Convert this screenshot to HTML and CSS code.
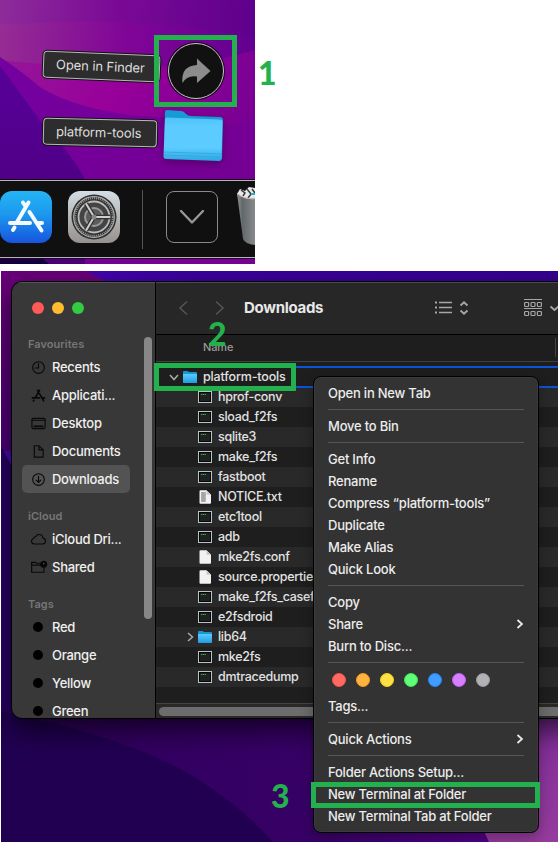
FILE: index.html
```html
<!DOCTYPE html>
<html lang="en">
<head>
<meta charset="utf-8">
<title>Open a terminal at platform-tools</title>
<link rel="stylesheet" href="styles.css">
</head>
<body>
<svg width="0" height="0" class="defs">
  <defs>
    <linearGradient id="folderFront" x1="0" y1="0" x2="0" y2="1"><stop offset="0" stop-color="#4fc3f5"/><stop offset=".2" stop-color="#5ccbff"/><stop offset=".7" stop-color="#5ccbff"/><stop offset="1" stop-color="#2ba6e0"/></linearGradient>
    <linearGradient id="smallFront" x1="0" y1="0" x2="0" y2="1"><stop offset="0" stop-color="#5ccaff"/><stop offset="1" stop-color="#1f9de0"/></linearGradient>
    <symbol id="exec" viewBox="0 0 14 12"><rect x=".5" y=".5" width="13" height="11" fill="#202221" stroke="#b9c4c7"/><rect x="1.5" y="1.5" width="11" height="9" fill="none" stroke="#000" stroke-width=".8"/><path d="M3 3.5h5" stroke="#37b24d" stroke-width="1" stroke-dasharray="1.3 .5"/></symbol>
    <symbol id="file" viewBox="0 0 14 14"><path d="M1.500 1.500Q1.500.3 2.500.3H8.500L13 4.800V13Q13 13.800 12 13.800H2.500Q1.500 13.800 1.500 13Z" fill="#f2f2f2"/><path d="M8.500.3L13 4.800H9.500Q8.500 4.800 8.500 4Z" fill="#c8c8c8"/></symbol>
    <symbol id="text" viewBox="0 0 14 14"><use href="#file"/><path d="M3 2h5v10H3z" fill="#b8b8b8"/><path d="M3.500 3h3M3.500 5h4M3.500 7h3M3.500 9h4M3.500 11h3" stroke="#777" stroke-width=".6"/></symbol>
    <symbol id="folder" viewBox="0 0 14 14"><path d="M0 2Q0 1 1 1H4.500L6 2H13Q14 2 14 3V12Q14 13 13 13H1Q0 13 0 12Z" fill="#1597d4"/><path d="M0 4H14V12Q14 13 13 13H1Q0 13 0 12Z" fill="url(#smallFront)"/></symbol>
  </defs>
</svg>

<section class="dock-scene">
  <svg class="wallpaper" viewBox="0 0 255 264" preserveAspectRatio="none">
    <defs>
      <linearGradient id="w1" x1="0" y1="0" x2="1" y2=".15"><stop offset="0" stop-color="#8e2c9a"/><stop offset=".45" stop-color="#7a0a96"/><stop offset="1" stop-color="#5e008c"/></linearGradient>
      <linearGradient id="w2" x1="0" y1="0" x2="1" y2=".1"><stop offset="0" stop-color="#962d94"/><stop offset=".5" stop-color="#800597"/><stop offset="1" stop-color="#620090"/></linearGradient>
      <linearGradient id="w3" x1="0" y1="0" x2="1" y2=".4"><stop offset="0" stop-color="#941898"/><stop offset=".45" stop-color="#98009a"/><stop offset="1" stop-color="#760093"/></linearGradient>
      <linearGradient id="w4" x1="0" y1="0" x2=".8" y2="1"><stop offset="0" stop-color="#7400a0"/><stop offset="1" stop-color="#760091"/></linearGradient>
      <linearGradient id="w5" x1="0" y1="0" x2="0" y2="1"><stop offset="0" stop-color="#58009a"/><stop offset="1" stop-color="#490078"/></linearGradient>
    </defs>
    <rect width="255" height="264" fill="url(#w1)"/>
    <path d="M0 24Q50 23 80 21Q170 21 255 38V264H0Z" fill="url(#w2)"/>
    <path d="M0 60Q30 64 70 65Q170 75 255 50V264H0Z" fill="url(#w3)"/>
    <path d="M0 57Q20 70 40 87Q90 118 190 118Q225 128 255 122V264H0Z" fill="url(#w4)"/>
    <path d="M0 66L42 123Q75 158 85 180V264H0Z" fill="url(#w5)"/>
    <path d="M0 259H43L49 264H0Z" fill="#16003c"/>
  </svg>
  <div class="stack">
    <div class="stack-row finder-row"><span class="bubble open">Open in Finder</span>
      <span class="round"><svg width="30" height="26" viewBox="0 0 30 26"><path d="M16 0.500L29.500 13L16 25V18.500Q6 17 1.500 25Q-.5 8 16 7Z" fill="#8c8c8c"/></svg></span>
    </div>
    <div class="stack-row folder-row"><span class="bubble tools">platform-tools</span>
      <svg class="bigfolder" width="62" height="54" viewBox="0 0 62 54"><path d="M3 3Q3 1 5 1L19 2Q22 2 24 5Q26 7 29 7L58 8Q61 8 61 11L60 49Q60 51 57 51L4 49Q2 49 2 47Z" fill="#159bd6"/><path d="M3 10Q3 8.500 5 8.500L58 10.500Q60.500 10.500 60.500 13L59.500 49Q59.500 52 57 52L4 50Q1.500 50 1.500 47Z" fill="url(#folderFront)"/><path d="M2 43L60 45M2 46L60 48" stroke="#2ca7df" stroke-width=".8"/></svg>
    </div>
  </div>
  <div class="dock">
    <svg class="app" width="52" height="52" viewBox="0 0 52 52"><defs><linearGradient id="store" x1="0" y1="0" x2="0" y2="1"><stop offset="0" stop-color="#24b5f5"/><stop offset=".45" stop-color="#1c98ee"/><stop offset="1" stop-color="#1755de"/></linearGradient></defs><rect width="52" height="52" rx="12" fill="url(#store)"/><g stroke="#f4f8ff" stroke-width="4" stroke-linecap="round" fill="none"><path d="M28.500 11.500L17 31M14.500 36.500L13 39M23 11.500L25 14.500M29.500 21L41.500 39.500M10 32H30M37 32H42"/></g></svg>
    <svg class="app" width="52" height="52" viewBox="0 0 52 52"><defs><linearGradient id="gear" x1="0" y1="0" x2="0" y2="1"><stop offset="0" stop-color="#d3dde3"/><stop offset="1" stop-color="#96918e"/></linearGradient></defs><rect width="52" height="52" rx="12" fill="url(#gear)"/><circle cx="26" cy="26" r="22.500" fill="#303030"/><circle cx="26" cy="26" r="20.300" fill="none" stroke="#b0b0b0" stroke-width="1.200"/><circle cx="26" cy="26" r="18.800" fill="none" stroke="#999" stroke-width="2" stroke-dasharray="1 1"/><circle cx="26" cy="26" r="15.500" fill="#444" stroke="#bcbcbc" stroke-width="1.800"/><circle cx="26" cy="26" r="9" fill="#5c5c5c" stroke="#999" stroke-width="2"/><path d="M26 26H42M26 26L18 12.500M26 26L18 39.500" stroke="#333" stroke-width="4.500"/><path d="M26 26H42M26 26L18 12.500M26 26L18 39.500" stroke="#cfcfcf" stroke-width="2"/><circle cx="26" cy="26" r="2.500" fill="#888"/></svg>
    <span class="divider"></span>
    <span class="tile"><svg width="26" height="16" viewBox="0 0 26 16"><path d="M2 2L13 13.500L24 2" fill="none" stroke="#989898" stroke-width="2.400" stroke-linecap="round" stroke-linejoin="round"/></svg></span>
    <svg class="bin" width="18" height="60" viewBox="0 0 18 60"><defs><linearGradient id="can" x1="0" y1="0" x2="1" y2="0"><stop offset="0" stop-color="#8f9394"/><stop offset=".3" stop-color="#62676a"/><stop offset="1" stop-color="#878b8c"/></linearGradient></defs><path d="M0 8L3 3L8 5L12 1L18 2V14H2Z" fill="#e8e8e8"/><path d="M4 4L8 7L6 10M10 3L14 8L11 12M15 3L18 7" stroke="#393939" stroke-width="1.500" fill="none"/><path d="M14 7h4v2h-4z" fill="#1fb5c5"/><path d="M0 7Q6 14 18 13V59Q8 58 6 53Z" fill="url(#can)"/><path d="M0 7Q6 13.500 18 12.500" fill="none" stroke="#bbb"/></svg>
  </div>
  <span class="mark mark-1"></span>
</section>
<span class="num n1">1</span>

<section class="finder-scene">
  <svg class="wallpaper" viewBox="0 0 557 571" preserveAspectRatio="none">
    <defs>
      <linearGradient id="b1" x1="0" y1="0" x2="1" y2="0"><stop offset="0" stop-color="#4a08b8"/><stop offset=".35" stop-color="#3a009a"/><stop offset="1" stop-color="#36008f"/></linearGradient>
      <linearGradient id="b2" x1="0" y1="0" x2="0" y2="1"><stop offset="0" stop-color="#680078"/><stop offset="1" stop-color="#4a0078"/></linearGradient>
      <linearGradient id="b3" x1="0" y1="0" x2="0" y2="1"><stop offset="0" stop-color="#7e2b99"/><stop offset="1" stop-color="#963c9d"/></linearGradient>
      <linearGradient id="b4" x1="0" y1="0" x2="1" y2="0"><stop offset="0" stop-color="#2e005c"/><stop offset=".55" stop-color="#370066"/><stop offset="1" stop-color="#5a0090"/></linearGradient>
    </defs>
    <rect width="557" height="571" fill="url(#b1)"/>
    <path d="M0 0H84Q98 6 108 12L60 180L0 180Z" fill="url(#b2)"/>
    <path d="M0 175L40 250V571H0Z" fill="#280064"/>
    <rect y="440" width="557" height="131" fill="url(#b4)"/>
    <path d="M0 440Q140 470 200 510Q245 540 272 571H0Z" fill="#210052"/>
    <path d="M430 440H557V571H488Q470 530 430 480Z" fill="url(#b3)"/>
  </svg>
  <div class="window">
    <aside class="sidebar">
      <div class="lights"><i class="red"></i><i class="amber"></i><i class="green"></i></div>
      <h2>Favourites</h2>
      <div class="place"><svg viewBox="0 0 16 16"><circle cx="8" cy="8" r="6.200"/><path d="M8 4V8.500H4.500"/></svg>Recents</div>
      <div class="place"><svg viewBox="0 0 16 16"><path d="M9 2.500L4.500 10.500M3 13L2.500 13.800M7 2.500L8 4.200M9 6L13.500 13.800M1.500 10.500H9M12 10.500H14.500" stroke-width="1.800"/></svg>Applicati...</div>
      <div class="place"><svg viewBox="0 0 16 16"><rect x="1" y="2.500" width="14" height="11" rx="1.500"/><path d="M1 4.500H15"/><path d="M3.500 11H12.500" stroke-width="2"/></svg>Desktop</div>
      <div class="place"><svg viewBox="0 0 16 16"><path d="M3.500 1.800H8.500L13 6.300V14H3.500ZM8.500 2V6.300H13"/></svg>Documents</div>
      <div class="place active"><svg viewBox="0 0 16 16"><circle cx="8" cy="8" r="6.200"/><path d="M8 4.500V11M5.500 8.700L8 11.200L10.500 8.700"/></svg>Downloads</div>
      <h2 class="icloud">iCloud</h2>
      <div class="place"><svg viewBox="0 0 16 16"><path d="M3.500 12.800Q.5 12.500.5 9.800Q.6 7.500 2.800 7Q3 5 5 5Q6.300 2.500 9 2.700Q12.400 3 12.800 6.500Q15.500 7 15.500 9.700Q15.400 12.800 12.500 12.800Z"/></svg>iCloud Dri...</div>
      <div class="place"><svg viewBox="0 0 16 16" class="wide"><path d="M10 3.500H6L5 2.500H.7V13H13.800V8M.7 5.500H10"/><circle cx="13.500" cy="4.500" r="3.200" fill="#080808"/><circle cx="13.500" cy="3.600" r=".8" fill="#555" stroke="none"/></svg>Shared</div>
      <h2 class="tags-title">Tags</h2>
      <div class="place"><b></b>Red</div>
      <div class="place"><b></b>Orange</div>
      <div class="place"><b></b>Yellow</div>
      <div class="place"><b></b>Green</div>
      <span class="scroll"></span>
    </aside>
    <main class="content">
      <header class="toolbar">
        <svg class="navs" width="47" height="16" viewBox="0 0 47 16"><path d="M9 1.500L2 8L9 14.500M38 1.500L45 8L38 14.500" fill="none" stroke="#555" stroke-width="1.500"/></svg>
        <h1>Downloads</h1>
        <svg class="views" width="35" height="16" viewBox="0 0 35 16"><g stroke="#a6a6a6" fill="none"><path d="M5 2.500H18M5 7.500H18M5 12.500H18" stroke-width="1.300"/><path d="M1 2.500H3M1 7.500H3M1 12.500H3" stroke-width="1.800"/><path d="M26.500 5.500L30 2.200L33.500 5.500M26.500 10.500L30 13.800L33.500 10.500" stroke-width="1.900"/></g></svg>
        <svg class="groups" width="35" height="20" viewBox="0 0 35 20"><g stroke="#a6a6a6" fill="none" stroke-width="1.200"><path d="M0 1.500H18M0 10.500H18"/><rect x=".6" y="4.500" width="4" height="4" rx=".8"/><rect x="7" y="4.500" width="4" height="4" rx=".8"/><rect x="13.400" y="4.500" width="4" height="4" rx=".8"/><rect x=".6" y="13.500" width="4" height="4" rx=".8"/><rect x="7" y="13.500" width="4" height="4" rx=".8"/><rect x="13.400" y="13.500" width="4" height="4" rx=".8"/><path d="M26.500 8.500L30.500 12L34.500 8.500" stroke-width="1.900"/></g></svg>
      </header>
      <div class="columns">Name<span></span></div>
      <div class="rows">
        <div class="row target"><svg class="twist" viewBox="0 0 10 10"><path d="M1 3L5 7.500L9 3"/></svg><svg class="kind"><use href="#folder"/></svg>platform-tools</div>
        <div class="row"><svg class="kind x"><use href="#exec"/></svg>hprof-conv</div>
        <div class="row"><svg class="kind x"><use href="#exec"/></svg>sload_f2fs</div>
        <div class="row"><svg class="kind x"><use href="#exec"/></svg>sqlite3</div>
        <div class="row"><svg class="kind x"><use href="#exec"/></svg>make_f2fs</div>
        <div class="row"><svg class="kind x"><use href="#exec"/></svg>fastboot</div>
        <div class="row"><svg class="kind"><use href="#text"/></svg>NOTICE.txt</div>
        <div class="row"><svg class="kind x"><use href="#exec"/></svg>etc1tool</div>
        <div class="row"><svg class="kind x"><use href="#exec"/></svg>adb</div>
        <div class="row"><svg class="kind"><use href="#file"/></svg>mke2fs.conf</div>
        <div class="row"><svg class="kind"><use href="#file"/></svg>source.properties</div>
        <div class="row"><svg class="kind x"><use href="#exec"/></svg>make_f2fs_casef</div>
        <div class="row"><svg class="kind x"><use href="#exec"/></svg>e2fsdroid</div>
        <div class="row parent"><svg class="twist" viewBox="0 0 10 10"><path d="M3 1L7.500 5L3 9"/></svg><svg class="kind"><use href="#folder"/></svg>lib64</div>
        <div class="row"><svg class="kind x"><use href="#exec"/></svg>mke2fs</div>
        <div class="row"><svg class="kind x"><use href="#exec"/></svg>dmtracedump</div>
      </div>
      <div class="hscroll"><span></span></div>
    </main>
  </div>
  <nav class="menu">
    <div class="item">Open in New Tab</div><hr>
    <div class="item">Move to Bin</div><hr>
    <div class="item">Get Info</div>
    <div class="item">Rename</div>
    <div class="item">Compress “platform-tools”</div>
    <div class="item">Duplicate</div>
    <div class="item">Make Alias</div>
    <div class="item">Quick Look</div><hr>
    <div class="item">Copy</div>
    <div class="item">Share<svg viewBox="0 0 8 10"><path d="M1.500 1L6 5L1.500 9"/></svg></div>
    <div class="item">Burn to Disc...</div><hr>
    <div class="dots"><i class="d1"></i><i class="d2"></i><i class="d3"></i><i class="d4"></i><i class="d5"></i><i class="d6"></i><i class="d7"></i></div>
    <div class="item">Tags...</div><hr>
    <div class="item">Quick Actions<svg viewBox="0 0 8 10"><path d="M1.500 1L6 5L1.500 9"/></svg></div><hr>
    <div class="item">Folder Actions Setup...</div>
    <div class="item">New Terminal at Folder</div>
    <div class="item">New Terminal Tab at Folder</div>
  </nav>
  <span class="mark mark-2"></span>
  <span class="mark mark-3"></span>
  <span class="num n2">2</span>
  <span class="num n3">3</span>
</section>
</body>
</html>
```
FILE: styles.css
```css
* { box-sizing: border-box; }
body { margin: 0; width: 558px; height: 842px; position: relative; overflow: hidden; background: #fff; font-family: Inter, "Liberation Sans", sans-serif; font-size: 13px; color: #e6e6e6; }
h1, h2 { margin: 0; }
svg { display: block; flex: none; }
.defs { position: absolute; }
.wallpaper { position: absolute; inset: 0; width: 100%; height: 100%; }

.dock-scene { position: relative; width: 255px; height: 264px; overflow: hidden; }
.stack { position: relative; height: 179px; padding: 43px 0 0 43px; }
.stack-row { display: flex; }
.finder-row { height: 66px; }
.bubble { display: block; height: 27px; line-height: 25px; border: 1px solid #b8b8b8; border-radius: 4px; background: #2d2d2d; box-shadow: 0 0 0 1px #111; padding-left: 12px; color: #dedede; white-space: nowrap; letter-spacing: -.1px; }
.open { width: 117px; transform: rotate(2.400deg); margin-top: 10px; }
.tools { width: 114px; transform: rotate(1.400deg); margin-top: 10px; }
.round { width: 56px; height: 56px; margin-left: 8px; border: 1px solid #c8c8c8; border-radius: 50%; background: #111; box-shadow: 0 0 0 1px #17001a; display: flex; align-items: center; justify-content: center; }
.bigfolder { margin: 0 0 0 5px; filter: drop-shadow(0 3px 4px rgba(50, 0, 60, .5)); }
.dock { position: relative; height: 80px; margin-top: 0; border-top: 1px solid #1c0024; border-bottom: 1px solid #220030; background: #101010; box-shadow: inset 0 1px #b4b4b4, inset 0 -1px #b4b4b4; display: flex; align-items: flex-start; padding-top: 11px; }
.app { margin-right: 16px; }
.divider { width: 1px; height: 59px; margin: -1px 0 0 6px; background: #555; }
.tile { width: 52px; height: 52px; margin-left: 23px; border: 1px solid #8a8a8a; border-radius: 8px; display: flex; align-items: center; justify-content: center; }
.bin { margin: -5px 0 0 19px; }

.num { position: absolute; font: 900 32px/32px Lato, "Open Sans", sans-serif; color: #22b14c; }
.n1 { left: 258px; top: 57px; }
.n2 { left: 207px; top: 47px; }
.n3 { left: 270px; top: 509px; }
.mark { position: absolute; border: 5px solid #22b14c; }
.mark-1 { left: 154px; top: 35px; width: 83px; height: 72px; }
.mark-2 { left: 153px; top: 92px; width: 142px; height: 28px; }
.mark-3 { left: 310px; top: 511px; width: 229px; height: 26px; }

.finder-scene { position: relative; width: 557px; height: 571px; margin: 7px 0 0 1px; padding: 10px 0 0 10px; overflow: hidden; }
.window { position: relative; width: 600px; height: 438px; border: 1px solid #000; border-radius: 11px; overflow: hidden; display: flex; background: #1e1e1e; box-shadow: 0 12px 26px rgba(0, 0, 0, .6); }
.sidebar { position: relative; width: 144px; height: 436px; border-right: 1px solid #000; background: #383838; padding: 20px 0 0 10px; box-shadow: inset 0 1px #555; }
.lights { display: flex; gap: 8px; padding-left: 10px; height: 36px; }
.lights i { width: 12px; height: 12px; border-radius: 50%; }
.red { background: #ff5a57; } .amber { background: #ffbc30; } .green { background: #32cc42; }
.sidebar h2 { height: 15px; line-height: 15px; margin: -1px 0 1px 6px; font-size: 11px; font-weight: 600; letter-spacing: .05px; color: #767676; }
.sidebar .icloud, .sidebar .tags-title { margin-top: 16px; margin-bottom: 1px; }
.sidebar .place { width: 108px; height: 28px; border-radius: 5px; display: flex; align-items: center; font-weight: 500; letter-spacing: -.26px; color: #f0f0f0; white-space: nowrap; }
.place svg { width: 15px; height: 15px; margin: 0 6px 0 9px; fill: none; stroke: #080808; stroke-width: 1.200; overflow: visible; stroke-linecap: round; }
.place b { width: 10px; height: 10px; margin: 0 9px 0 11px; border-radius: 50%; background: #000; }
.sidebar .active { background: #535353; }
.scroll { position: absolute; right: 3px; top: 55px; width: 8px; height: 282px; border-radius: 4px; background: #878787; }

.content { width: 454px; height: 436px; }
.toolbar { height: 53px; background: #272727; border-bottom: 1px solid #000; display: flex; align-items: center; padding: 0 0 1px 22px; box-shadow: inset 0 1px #4b4b4b; }
.toolbar h1 { width: 190px; margin-left: 19px; font-size: 15px; font-weight: 700; color: #e8e8e8; letter-spacing: -.3px; }
.groups { margin-left: 55px; }
.columns { height: 27px; line-height: 25px; border-bottom: 1px solid #404040; padding-left: 47px; font-size: 11px; font-weight: 500; letter-spacing: -.1px; color: #999; display: flex; }
.columns span { width: 1px; height: 19px; margin: 3px 0 0 322px; background: #444; }
.rows { height: 341px; padding-top: 5px; }
.row { height: 20px; display: flex; align-items: center; padding: 0 0 1px 42px; color: #e2e2e2; font-size: 12.5px; line-height: 15px; font-weight: 450; letter-spacing: -.28px; white-space: nowrap; }
.row:nth-child(even) { background: #292929; }
.row.target { position: relative; padding-left: 13px; letter-spacing: -.16px; box-shadow: 0 -1px #0a55d6, inset 0 1px #0a55d6, 0 1px #0a55d6, inset 0 -1px #0a55d6; }
.row.parent { padding-left: 29px; }
.kind { width: 14px; height: 14px; margin-right: 6px; }
.kind.x { height: 12px; }
.twist { width: 10px; height: 10px; margin-right: 4px; fill: none; stroke: #aaa; stroke-width: 1.500; }
.row.parent .twist { margin-right: 3px; }
.hscroll { height: 15px; border-top: 1px solid #444; background: #292929; padding: 3px 0 0 3px; }
.hscroll span { display: block; height: 9px; border-radius: 5px; background: #6c6c6c; }

.menu { position: absolute; left: 312px; top: 105px; width: 226px; height: 457px; padding: 5px 14px; border: 1px solid #000; border-radius: 8px; background: #333; box-shadow: inset 0 0 0 .5px #444, 0 5px 14px rgba(0, 0, 0, .3); }
.item { height: 22px; display: flex; align-items: center; justify-content: space-between; white-space: nowrap; font-weight: 450; letter-spacing: -.22px; color: #ececec; }
.item svg { width: 8px; height: 10px; fill: none; stroke: #ececec; stroke-width: 1.700; }
.menu hr { height: 1px; margin: 5px 0; border: 0; background: #565656; }
.dots { height: 27px; padding: 5px 0 0 4px; display: flex; gap: 10px; }
.dots i { width: 14px; height: 14px; border-radius: 50%; }
.d1 { background: #ff6b63; border: 1px solid #f95248; }
.d2 { background: #ffb340; border: 1px solid #f69b1d; }
.d3 { background: #ffe045; border: 1px solid #efd01d; }
.d4 { background: #5fff77; border: 1px solid #3de353; }
.d5 { background: #409cff; border: 1px solid #2684ef; }
.d6 { background: #d680ff; border: 1px solid #c260f2; }
.d7 { background: #b1b1b6; border: 1px solid #98989d; }
```
